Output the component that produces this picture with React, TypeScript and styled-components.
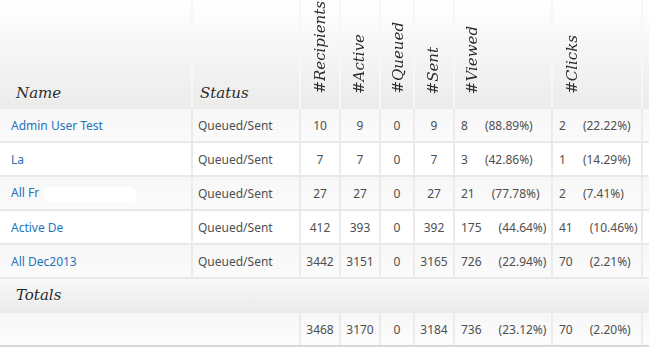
import React from "react";
import styled, { createGlobalStyle, css } from "styled-components";

const GlobalStyle = createGlobalStyle`
  html, body { margin: 0; padding: 0; background: #ffffff; overflow: hidden; }
  *, *::before, *::after { box-sizing: border-box; }
`;

const Wrapper = styled.div`
  width: 649px;
  height: 347px;
  overflow: hidden;
`;

const Table = styled.table`
  table-layout: fixed;
  border-collapse: separate;
  border-spacing: 0;
  width: 703px;
  font-family: "Noto Sans", "DejaVu Sans", sans-serif;
  font-size: 12px;
  color: #4f4f4f;
  border-bottom: 2px solid #d9d9d9;
`;

const HeadRow = styled.tr`
  height: 109px;
  background: linear-gradient(#ffffff 0%, #f6f6f6 45%, #ebebea 100%);
`;

const serif = css`
  font-family: "DejaVu Serif", "Liberation Serif", serif;
  font-style: italic;
  font-weight: normal;
  font-size: 15px;
  color: #2a2a2a;
  text-shadow: 0 1px 0 #ffffff;
`;

const HeadCell = styled.th<{ $w: number; $pl?: number }>`
  ${serif}
  width: ${(p) => p.$w}px;
  padding: 0 0 7px ${(p) => p.$pl ?? 8}px;
  text-align: left;
  vertical-align: bottom;
  border-right: 2px solid #f7f7f7;
`;

const RotHeadCell = styled(HeadCell)`
  padding-bottom: 11px;
`;

const Rotated = styled.span`
  display: inline-block;
  writing-mode: vertical-rl;
  transform: rotate(180deg);
  line-height: 17px;
  white-space: nowrap;
`;

const BodyRow = styled.tr<{ $shaded: boolean }>`
  height: 34px;
  background: ${(p) =>
    p.$shaded ? "linear-gradient(#f7f7f7, #fbfbfb)" : "#ffffff"};
`;

const Cell = styled.td<{ $align?: "left" | "center"; $pl?: number }>`
  padding: 0 0 0 ${(p) => p.$pl ?? 0}px;
  text-align: ${(p) => p.$align ?? "center"};
  vertical-align: middle;
  white-space: nowrap;
  overflow: hidden;
  border-right: 2px solid #ebebeb;
  border-bottom: 2px solid #e8e8e8;
`;

const NameLink = styled.a`
  color: #2574bb;
  text-decoration: none;
`;

const Redacted = styled.span`
  display: inline-block;
  vertical-align: middle;
  width: 94px;
  height: 15px;
  margin-left: 4px;
  border-radius: 8px;
  background: #ffffff;
  filter: blur(0.6px);
`;

const Pct = styled.span<{ $gap: number }>`
  margin-left: ${(p) => p.$gap}px;
`;

const TotalsLabelRow = styled.tr`
  height: 34px;
  background: linear-gradient(#f9f9f9 0%, #f1f1f1 50%, #ebebeb 100%);
`;

const TotalsLabel = styled.td`
  ${serif}
  padding: 0 0 3px 16px;
  vertical-align: middle;
`;

const TotalsRow = styled.tr`
  height: 32px;
  background: linear-gradient(#f7f7f7, #fcfcfc);
`;

const TotalsCell = styled(Cell)`
  border-bottom: none;
`;

type Row = {
  name: string;
  redact?: boolean;
  recipients: number;
  active: number;
  queued: number;
  sent: number;
  viewed: number;
  viewedPct: string;
  clicks: number;
  clicksPct: string;
};

const rows: Row[] = [
  { name: "Admin User Test", recipients: 10, active: 9, queued: 0, sent: 9, viewed: 8, viewedPct: "(88.89%)", clicks: 2, clicksPct: "(22.22%)" },
  { name: "La", recipients: 7, active: 7, queued: 0, sent: 7, viewed: 3, viewedPct: "(42.86%)", clicks: 1, clicksPct: "(14.29%)" },
  { name: "All Fr", redact: true, recipients: 27, active: 27, queued: 0, sent: 27, viewed: 21, viewedPct: "(77.78%)", clicks: 2, clicksPct: "(7.41%)" },
  { name: "Active De", recipients: 412, active: 393, queued: 0, sent: 392, viewed: 175, viewedPct: "(44.64%)", clicks: 41, clicksPct: "(10.46%)" },
  { name: "All Dec2013", recipients: 3442, active: 3151, queued: 0, sent: 3165, viewed: 726, viewedPct: "(22.94%)", clicks: 70, clicksPct: "(2.21%)" },
];

export default function App() {
  return (
    <Wrapper>
      <GlobalStyle />
      <Table>
        <thead>
          <HeadRow>
            <HeadCell $w={193} $pl={16}>Name</HeadCell>
            <HeadCell $w={108} $pl={7}>Status</HeadCell>
            <RotHeadCell $w={40} $pl={11}><Rotated>#Recipients</Rotated></RotHeadCell>
            <RotHeadCell $w={40} $pl={10}><Rotated>#Active</Rotated></RotHeadCell>
            <RotHeadCell $w={34} $pl={9}><Rotated>#Queued</Rotated></RotHeadCell>
            <RotHeadCell $w={40} $pl={10}><Rotated>#Sent</Rotated></RotHeadCell>
            <RotHeadCell $w={98} $pl={9}><Rotated>#Viewed</Rotated></RotHeadCell>
            <RotHeadCell $w={90} $pl={11}><Rotated>#Clicks</Rotated></RotHeadCell>
            <HeadCell $w={60} />
          </HeadRow>
        </thead>
        <tbody>
          {rows.map((r, i) => (
            <BodyRow key={r.name} $shaded={i % 2 === 0}>
              <Cell $align="left" $pl={11}>
                <NameLink href="#">{r.name}</NameLink>
                {r.redact && <Redacted />}
              </Cell>
              <Cell $align="left" $pl={5}>Queued/Sent</Cell>
              <Cell>{r.recipients}</Cell>
              <Cell>{r.active}</Cell>
              <Cell>{r.queued}</Cell>
              <Cell>{r.sent}</Cell>
              <Cell $align="left" $pl={6}>
                {r.viewed}
                <Pct $gap={17}>{r.viewedPct}</Pct>
              </Cell>
              <Cell $align="left" $pl={6}>
                {r.clicks}
                <Pct $gap={17}>{r.clicksPct}</Pct>
              </Cell>
              <Cell />
            </BodyRow>
          ))}
          <TotalsLabelRow>
            <TotalsLabel colSpan={9}>Totals</TotalsLabel>
          </TotalsLabelRow>
          <TotalsRow>
            <TotalsCell colSpan={2} />
            <TotalsCell>3468</TotalsCell>
            <TotalsCell>3170</TotalsCell>
            <TotalsCell>0</TotalsCell>
            <TotalsCell>3184</TotalsCell>
            <TotalsCell $align="left" $pl={6}>
              736
              <Pct $gap={17}>(23.12%)</Pct>
            </TotalsCell>
            <TotalsCell $align="left" $pl={6}>
              70
              <Pct $gap={17}>(2.20%)</Pct>
            </TotalsCell>
            <TotalsCell />
          </TotalsRow>
        </tbody>
      </Table>
    </Wrapper>
  );
}
